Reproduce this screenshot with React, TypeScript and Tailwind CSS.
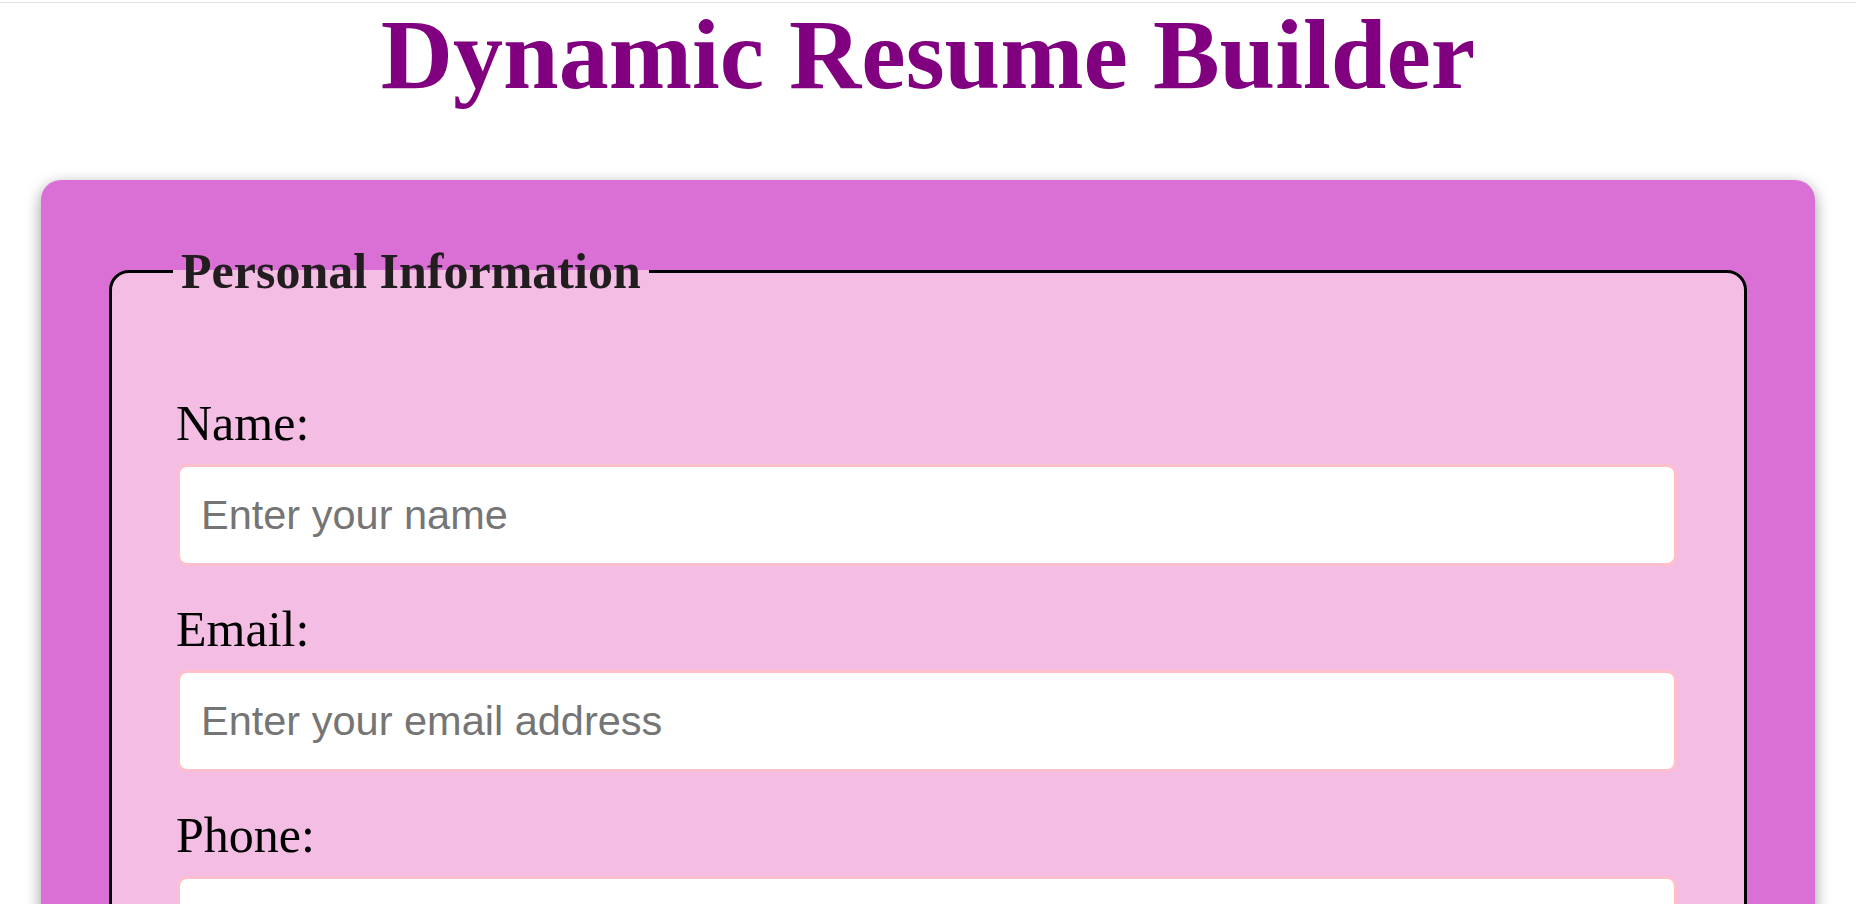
import React from "react";

const fields = [
  { id: "name", label: "Name:", type: "text", placeholder: "Enter your name" },
  { id: "email", label: "Email:", type: "email", placeholder: "Enter your email address" },
  { id: "phone", label: "Phone:", type: "tel", placeholder: "Enter your phone number" },
];

const App = () => {
  return (
    <div className="w-[1856px] min-h-screen bg-white pt-[2px] pb-10">
      <div className="h-px bg-[#e3e3e3]" />

      {/* Header */}
      <h1 className="mt-[2px] text-center font-['Liberation_Serif',serif] text-[100px] font-bold leading-none text-[#800080]">
        Dynamic Resume Builder
      </h1>

      <form className="mx-[41px] mt-[75px] rounded-[20px] bg-[#da70d6] px-[68px] pt-[63px] pb-[68px] shadow-[0_5px_16px_rgba(0,0,0,0.4)]">
        <fieldset className="rounded-[20px] border-[3px] border-black bg-[#f4bde3] pl-[65px] pr-[67px] pt-[96px] pb-[40px]">
          <legend className="-ml-[4px] px-[8px] font-['Liberation_Serif',serif] text-[50px] font-bold leading-[57px] text-[#221e1f]">
            Personal Information
          </legend>

          {fields.map((f) => (
            <div key={f.id}>
              <label
                htmlFor={f.id}
                className="-ml-px mb-[14px] block font-['Liberation_Serif',serif] text-[50px] leading-[54px] text-black"
              >
                {f.label}
              </label>
              <input
                id={f.id}
                type={f.type}
                placeholder={f.placeholder}
                className="mb-[36px] block h-[102px] w-full rounded-[10px] border-[3px] border-[#ffc0cb] bg-white pl-[21px] pr-4 font-['Liberation_Sans',Arial,sans-serif] text-[41.5px] text-black outline-none placeholder:text-[#757575]"
              />
            </div>
          ))}
        </fieldset>
      </form>
    </div>
  );
};

export default App;
